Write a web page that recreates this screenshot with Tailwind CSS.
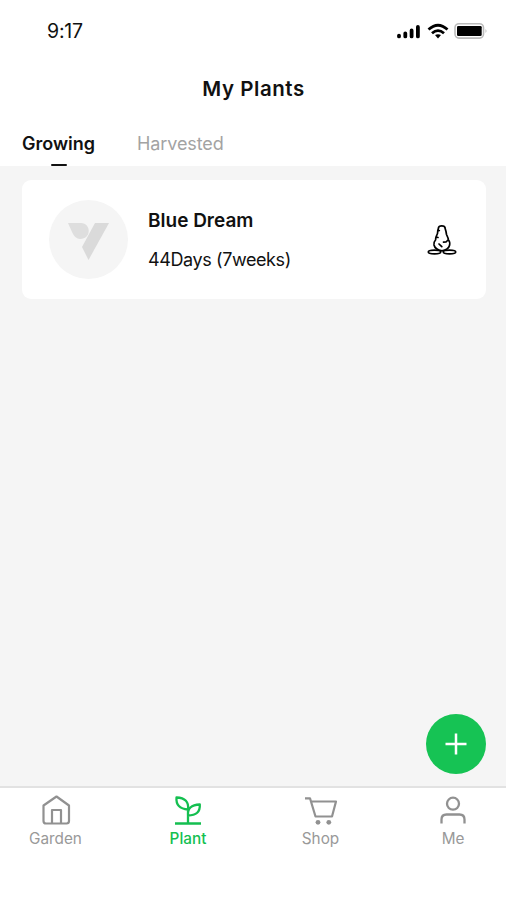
<!DOCTYPE html>
<html lang="en">
<head>
<meta charset="utf-8">
<title>My Plants</title>
<script src="https://cdn.jsdelivr.net/npm/@tailwindcss/browser@4"></script>
</head>
<body class="bg-white">
<div class="flex h-[900px] w-[506px] flex-col overflow-hidden bg-white font-['Inter','Liberation_Sans',sans-serif] text-[#111]">
  <header class="flex h-[166px] shrink-0 flex-col">
    <div class="flex h-[62px] items-center justify-between pr-[18px] pl-[47px]">
      <span class="text-[19.5px] leading-6 tracking-[-0.2px]">9:17</span>
      <div class="flex items-center gap-[6px]">
        <svg class="h-[18px] w-[26px]" viewBox="0 0 26 18" fill="none" stroke="#000" stroke-width="3.8" stroke-linecap="round"><path d="M4 13.600v.8M10.300 11.300v3.100M16.600 8.400v6M22.900 5v9.400"/></svg>
        <svg class="h-[18px] w-[22px]" viewBox="0 0 22 18" fill="none" stroke="#000" stroke-width="2.8"><path d="M1.500 7.500Q11 -1 20.500 7.500M5 11.300Q11 6 17 11.300"/><path d="M8 13.100Q11 11.200 14 13.100L11 16.400Z" fill="#000" stroke="none"/></svg>
        <svg class="-ml-[1px] h-[18px] w-[34px]" viewBox="0 0 34 18"><rect x="1" y="1.700" width="28.500" height="14.400" rx="4" fill="#fff" stroke="#bbb" stroke-width="1.600"/><rect x="3" y="4" width="24.700" height="10" rx="1.300"/><path d="M31.500 7q2 2 0 4z" fill="#bbb"/></svg>
      </div>
    </div>
    <h1 class="flex h-[54px] items-center justify-center pl-px text-[20.5px] font-semibold tracking-[0.55px]">My Plants</h1>
    <nav class="flex h-[50px] gap-[42px] pl-[22px]">
      <div class="flex w-[73px] flex-col items-center justify-between pt-[15.5px]">
        <span class="text-[18px] leading-6 font-semibold whitespace-nowrap">Growing</span>
        <span class="h-[2.5px] w-[16px] rounded-full bg-[#111]"></span>
      </div>
      <span class="pt-[15.5px] text-[18px] leading-6 tracking-[-0.1px] text-[#a3a3a3]">Harvested</span>
    </nav>
  </header>

  <main class="flex flex-1 flex-col justify-between bg-[#f5f5f5] pt-[14px] pr-[20px] pb-[12px] pl-[22px]">
    <article class="flex h-[119px] items-center rounded-[9px] bg-white pr-[29px] pl-[27px]">
      <svg class="size-[79px] shrink-0" viewBox="0 0 79 79"><circle cx="39.500" cy="39.500" r="39.500" fill="#f5f5f5"/><path d="M19 23H32C42 23 43 39 31 39Q26 39 23 32Z" fill="#dedede"/><path d="M46 23H60L39.500 60L33 47Z" fill="#dadada"/></svg>
      <div class="flex flex-1 flex-col gap-[15px] pt-px pl-[20px]">
        <h2 class="text-[19px] leading-6 font-semibold">Blue Dream</h2>
        <p class="text-[18px] leading-6 tracking-[-0.4px] whitespace-nowrap">44Days (7weeks)</p>
      </div>
      <svg class="h-[32px] w-[30px]" viewBox="0 0 30 32" fill="none" stroke="#000" stroke-width="1.700" stroke-linecap="round" stroke-linejoin="round"><path d="M11.500 4Q11.500 1.800 14.700 1.800Q18 1.800 18 4L19 7.500L19.500 10.500L21 14L21.500 16Q23.300 18 22.500 21.500Q21.500 25.500 15 26.800Q8 25.500 7 21Q6.500 18 8.500 16L9 13L10.500 9.500L10.800 6.500ZM12 20l2.800 2.700M16.500 18.200l2.500-.2 2-2M9 13l2 .5M10.800 7l1.500-.5"/><ellipse cx="7.500" cy="28" rx="6.200" ry="1.800"/><ellipse cx="22.500" cy="28" rx="6.200" ry="1.800"/></svg>
    </article>
    <button aria-label="Add plant" class="flex size-[60px] items-center justify-center self-end rounded-full bg-[#16c354]">
      <svg class="size-[22px]" viewBox="0 0 22 22" stroke="#fff" stroke-width="2.500"><path d="M0.500 11H21.500M11 0.500V21.500"/></svg>
    </button>
  </main>

  <footer class="flex h-[114px] shrink-0 justify-between border-t-2 border-[#e2e2e2] bg-white pt-[6px] pr-[13px] pl-[15.5px] text-[15.3px] leading-5 text-[#999]">
    <div class="flex w-[80px] flex-col items-center gap-[2.5px]">
      <svg class="h-[32px] w-[36px]" viewBox="0 0 36 32" fill="none" stroke="#919191" stroke-width="2.200" stroke-linejoin="round"><path d="M18.500 2.500L31 11.500V27Q31 29.500 28.500 29.500H8Q5.500 29.500 5.500 27V11.500ZM14 29.500V16H23V29.500"/></svg>
      <span>Garden</span>
    </div>
    <div class="flex w-[80px] flex-col items-center gap-[2.5px] text-[#14bf50]">
      <svg class="h-[32px] w-[36px]" viewBox="0 0 36 32" fill="none" stroke="#14bf50" stroke-width="2.300" stroke-linejoin="round"><path d="M5 29.500H31M18 29.500V15.500Q19.500 4 6.500 3.500Q5.500 14.500 18 15.500M18 21.500Q17 11 29.800 10.500Q30.500 21.500 18 21.500"/></svg>
      <span class="font-medium">Plant</span>
    </div>
    <div class="flex w-[80px] flex-col items-center gap-[2.5px]">
      <svg class="h-[32px] w-[36px]" viewBox="0 0 36 32" fill="none" stroke="#919191" stroke-width="2.200" stroke-linejoin="round"><path d="M2 4.300H7L12.500 22.500H29L33 7.500H8"/><circle cx="15" cy="28.300" r="2.400" fill="#919191" stroke="none"/><circle cx="25.800" cy="28.300" r="2.400" fill="#919191" stroke="none"/></svg>
      <span>Shop</span>
    </div>
    <div class="flex w-[80px] flex-col items-center gap-[2.5px]">
      <svg class="h-[32px] w-[36px]" viewBox="0 0 36 32" fill="none" stroke="#919191" stroke-width="2.300"><circle cx="18" cy="9.700" r="6"/><path d="M6.500 29.500V25.500Q6.500 20.500 11.500 20.500H24.500Q29.500 20.500 29.500 25.500V29.500"/></svg>
      <span>Me</span>
    </div>
  </footer>
</div>
</body>
</html>
